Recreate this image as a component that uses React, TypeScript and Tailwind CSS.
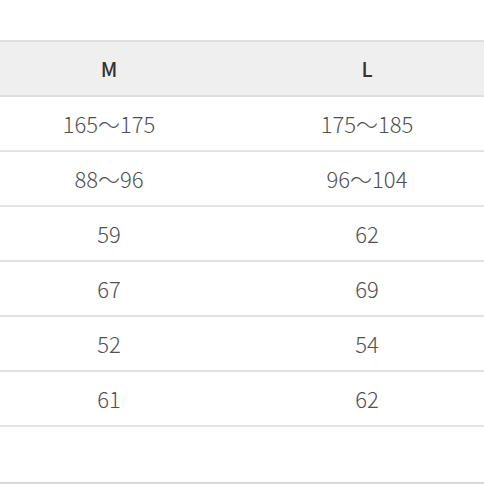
const rows: [string, string][] = [
  ["165～175", "175～185"],
  ["88～96", "96～104"],
  ["59", "62"],
  ["67", "69"],
  ["52", "54"],
  ["61", "62"],
];

export default function App() {
  return (
    <div className="w-[484px] h-[484px] overflow-hidden bg-white font-['Noto_Sans_CJK_KR','Noto_Sans',sans-serif] text-[#505050]">
      <div className="pt-[40px]">
        <div className="ml-[-20px] w-[516px] border-t-2 border-[#dedede]">
          <div className="grid grid-cols-[258px_258px] h-[55px] bg-[#efefef] border-b-2 border-[#dedede] items-center text-center text-[20px] font-medium text-[#333]">
            <div>M</div>
            <div>L</div>
          </div>
          {rows.map((r, i) => (
            <div
              key={i}
              className="grid grid-cols-[258px_258px] h-[55px] border-b-2 border-[#e2e2e2] items-center text-center text-[22px] font-light"
            >
              <div>{r[0]}</div>
              <div>{r[1]}</div>
            </div>
          ))}
          <div className="h-[57px] border-b-2 border-[#d8d8d8]" />
        </div>
      </div>
    </div>
  );
}
